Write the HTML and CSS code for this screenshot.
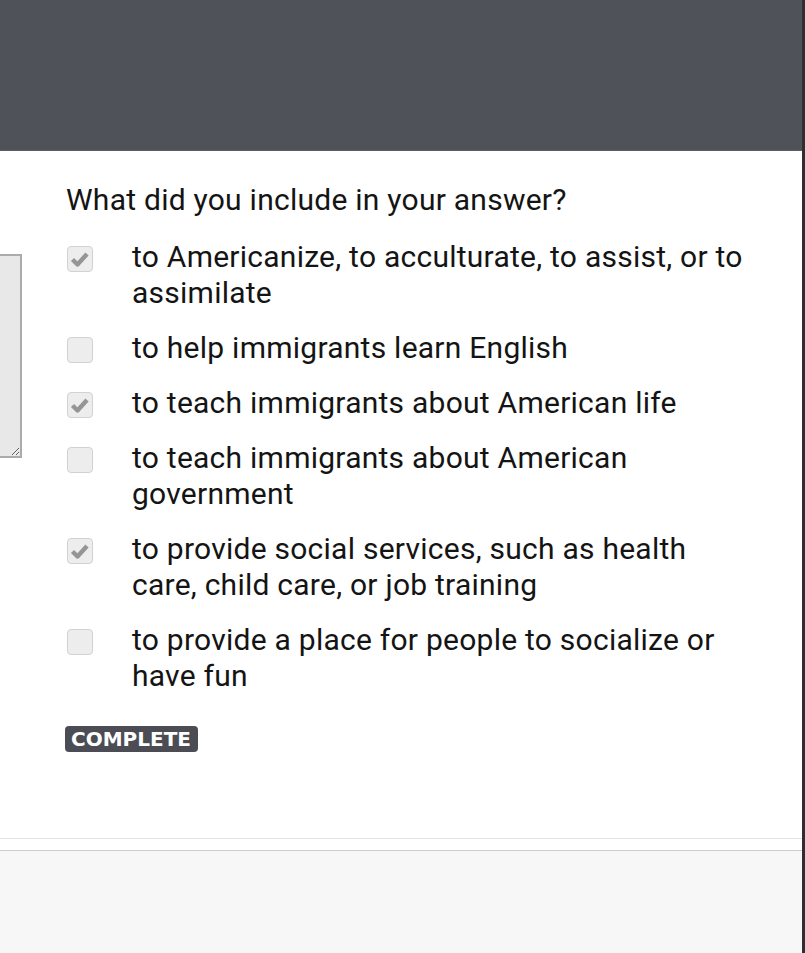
FILE: index.html
```html
<!DOCTYPE html>
<html lang="en">
<head>
<meta charset="utf-8">
<title>Checklist</title>
<link rel="stylesheet" href="styles.css">
</head>
<body>
<div class="app">
  <header class="topbar"></header>
  <main class="panel">
    <div class="side"><textarea class="answer" readonly></textarea></div>
    <section class="content">
      <p class="question">What did you include in your answer?</p>
      <ul class="checklist">
        <li class="item"><span class="box checked"><svg viewBox="0 0 26 26" width="26" height="26"><path d="M5.5 13.5 L10.5 18.5 L20 8" fill="none" stroke="#959595" stroke-width="4.4" stroke-linejoin="round"/></svg></span><span class="label">to Americanize, to acculturate, to assist, or to assimilate</span></li>
        <li class="item"><span class="box"></span><span class="label">to help immigrants learn English</span></li>
        <li class="item"><span class="box checked"><svg viewBox="0 0 26 26" width="26" height="26"><path d="M5.5 13.5 L10.5 18.5 L20 8" fill="none" stroke="#959595" stroke-width="4.4" stroke-linejoin="round"/></svg></span><span class="label">to teach immigrants about American life</span></li>
        <li class="item"><span class="box"></span><span class="label">to teach immigrants about American government</span></li>
        <li class="item"><span class="box checked"><svg viewBox="0 0 26 26" width="26" height="26"><path d="M5.5 13.5 L10.5 18.5 L20 8" fill="none" stroke="#959595" stroke-width="4.4" stroke-linejoin="round"/></svg></span><span class="label">to provide social services, such as health care, child care, or job training</span></li>
        <li class="item"><span class="box"></span><span class="label">to provide a place for people to socialize or have fun</span></li>
      </ul>
      <span class="badge">COMPLETE</span>
    </section>
  </main>
  <div class="strip"></div>
  <footer class="footer"></footer>
</div>
</body>
</html>
```
FILE: styles.css
```css
* { box-sizing: border-box; }
html, body { margin: 0; padding: 0; height: 100%; background: #f7f7f7; }
body { font-family: Roboto, "Noto Sans", sans-serif; color: #141414; }

.app {
  width: 805px;
  height: 953px;
  display: flex;
  flex-direction: column;
  border-right: 3px solid #2f2f33;
  overflow: hidden;
}

.topbar {
  height: 151px;
  flex: none;
  background: #50525a;
  border-bottom: 1px solid #5c5e65;
}

.panel {
  flex: none;
  display: flex;
  background: #ffffff;
  border-bottom: 1px solid #e3e3e3;
}

.side {
  width: 22px;
  flex: none;
  overflow: hidden;
  padding-top: 103px;
}

.answer {
  display: block;
  width: 200px;
  height: 204px;
  margin: 0 0 0 -178px;
  padding: 0;
  background: #e8e8e8;
  border: 2px solid #ababab;
  border-radius: 0;
  resize: vertical;
  outline: none;
}

.content {
  flex: 1;
  padding: 31px 44px 86px 44px;
}

.question {
  margin: 0 0 21px 0;
  font-size: 30px;
  letter-spacing: 0.25px;
  line-height: 36px;
}

.checklist {
  list-style: none;
  margin: 0;
  padding: 0;
  display: flex;
  flex-direction: column;
  gap: 19px;
}

.item {
  display: flex;
  align-items: flex-start;
  gap: 39px;
  font-size: 30px;
  letter-spacing: 0.25px;
  line-height: 36px;
}

.box {
  flex: none;
  width: 26px;
  height: 26px;
  margin: 7px 0 0 1px;
  border: 1px solid #d2d2d2;
  border-radius: 4px;
  background: #ededed;
  display: flex;
  align-items: center;
  justify-content: center;
}

.box svg { display: block; margin: -1px; }

.label { width: 622px; }

.badge {
  display: inline-block;
  margin-top: 32px;
  margin-left: -1px;
  padding: 0 7px 0 6px;
  height: 26px;
  line-height: 26px;
  background: #4b4c54;
  color: #ffffff;
  border-radius: 4px;
  font-family: "DejaVu Sans", sans-serif;
  font-weight: bold;
  font-size: 20px;
  letter-spacing: 0;
}

.strip {
  flex: none;
  height: 12px;
  background: #ffffff;
  border-bottom: 1px solid #cdcdcd;
  box-shadow: 0 1px 1px #dedede;
}

.footer {
  flex: 1;
  background: #f7f7f7;
}
```
